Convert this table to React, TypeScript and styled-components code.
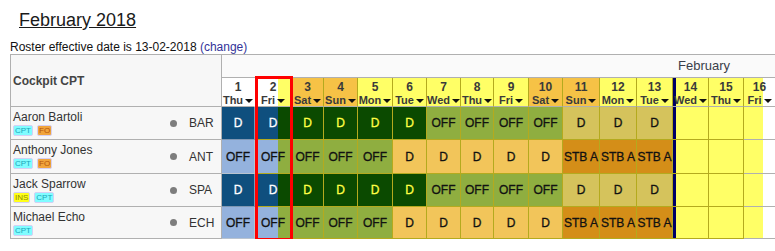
import React from 'react';
import styled, { createGlobalStyle } from 'styled-components';

const Global = createGlobalStyle`
  html, body { margin: 0; padding: 0; background: #fff; }
  body { font-family: "Liberation Sans", Arial, sans-serif; color: #111; }
`;

const C = {
  blueDark: '#0f4f7e',
  blueLight: '#94b2dd',
  greenDark: '#0b4a00',
  olive: '#8fae40',
  khaki: '#d5c35c',
  orangeLight: '#f2c55a',
  orangeDark: '#d48e18',
  yellow: '#ffff66',
  headOrange: '#f6c246',
  line: '#b4aa1e',
  gray: '#b0b0b0',
};

type Day = { d: number; n: string; w: number; kind: 'white' | 'split' | 'we' | 'wd' | 'cut' };

const days: Day[] = [
  { d: 1, n: 'Thu', w: 33, kind: 'white' },
  { d: 2, n: 'Fri', w: 37, kind: 'split' },
  { d: 3, n: 'Sat', w: 32, kind: 'we' },
  { d: 4, n: 'Sun', w: 34, kind: 'we' },
  { d: 5, n: 'Mon', w: 35, kind: 'wd' },
  { d: 6, n: 'Tue', w: 34, kind: 'wd' },
  { d: 7, n: 'Wed', w: 34, kind: 'wd' },
  { d: 8, n: 'Thu', w: 33, kind: 'wd' },
  { d: 9, n: 'Fri', w: 35, kind: 'wd' },
  { d: 10, n: 'Sat', w: 34, kind: 'we' },
  { d: 11, n: 'Sun', w: 37, kind: 'we' },
  { d: 12, n: 'Mon', w: 37, kind: 'wd' },
  { d: 13, n: 'Tue', w: 36, kind: 'wd' },
  { d: 14, n: 'Wed', w: 36, kind: 'wd' },
  { d: 15, n: 'Thu', w: 35, kind: 'wd' },
  { d: 16, n: 'Fri', w: 32, kind: 'cut' },
];

const headBg = (k: Day['kind']) => {
  switch (k) {
    case 'white':
      return '#fff';
    case 'split':
      return `linear-gradient(to right, #fff 23px, ${C.yellow} 23px)`;
    case 'we':
      return C.headOrange;
    case 'cut':
      return `linear-gradient(to right, ${C.yellow} 19px, #fff 19px)`;
    default:
      return C.yellow;
  }
};

type CellType = { bg: string; text: string; color: string; line: string };

const T: Record<string, CellType> = {
  blueD: { bg: C.blueDark, text: 'D', color: '#fff', line: '#7f97b3' },
  blueOff: { bg: C.blueLight, text: 'OFF', color: '#111', line: '#b9c3cf' },
  greenD: { bg: C.greenDark, text: 'D', color: '#ffff44', line: C.line },
  oliveOff: { bg: C.olive, text: 'OFF', color: '#111', line: C.line },
  khakiD: { bg: C.khaki, text: 'D', color: '#111', line: C.line },
  orangeD: { bg: C.orangeLight, text: 'D', color: '#111', line: C.line },
  stb: { bg: C.orangeDark, text: 'STB A', color: '#111', line: C.line },
  empty: { bg: C.yellow, text: '', color: '#111', line: C.line },
  cut: { bg: `linear-gradient(to right, ${C.yellow} 19px, #fff 19px)`, text: '', color: '#111', line: C.gray },
};

const split = (a: CellType, b: CellType): CellType => ({
  bg: `linear-gradient(to right, ${a.bg} 23px, ${b.bg} 23px)`,
  text: a.text,
  color: a.color,
  line: b.line,
});

const rowA: CellType[] = [
  T.blueD,
  split(T.blueD, T.greenD),
  T.greenD, T.greenD, T.greenD, T.greenD,
  T.oliveOff, T.oliveOff, T.oliveOff, T.oliveOff,
  T.khakiD, T.khakiD, T.khakiD,
  T.empty, T.empty, T.cut,
];

const rowB: CellType[] = [
  T.blueOff,
  { ...split(T.blueOff, T.oliveOff), text: 'OFF' },
  T.oliveOff, T.oliveOff, T.oliveOff,
  T.orangeD, T.orangeD, T.orangeD, T.orangeD, T.orangeD,
  T.stb, T.stb, T.stb,
  T.empty, T.empty, T.cut,
];

type Role = 'CPT' | 'FO' | 'INS';
const crew: { name: string; code: string; roles: Role[]; row: CellType[] }[] = [
  { name: 'Aaron Bartoli', code: 'BAR', roles: ['CPT', 'FO'], row: rowA },
  { name: 'Anthony Jones', code: 'ANT', roles: ['CPT', 'FO'], row: rowB },
  { name: 'Jack Sparrow', code: 'SPA', roles: ['INS', 'CPT'], row: rowA },
  { name: 'Michael Echo', code: 'ECH', roles: ['CPT'], row: rowB },
];

const roleStyle: Record<Role, { bg: string; fg: string }> = {
  CPT: { bg: '#80fcff', fg: '#1aa6b8' },
  FO: { bg: '#f0a43c', fg: '#b4520a' },
  INS: { bg: '#ffff1a', fg: '#8c8c00' },
};

const Page = styled.div`
  width: 775px;
  height: 251px;
  overflow: hidden;
`;

const Title = styled.h1`
  margin: 0;
  padding: 10px 0 0 19px;
  font-size: 18px;
  line-height: 21px;
  font-weight: normal;
  text-decoration: underline;
  color: #1a1a1a;
`;

const Effective = styled.div`
  margin: 9px 0 0 10px;
  font-size: 12px;
  line-height: 14px;
  height: 14px;
  white-space: nowrap;
`;

const ChangeLink = styled.a`
  color: #333399;
  text-decoration: none;
`;

const TableWrap = styled.div`
  position: relative;
  margin-left: 10px;
  width: 765px;
  overflow: hidden;
`;

const Grid = styled.div`
  display: grid;
  grid-template-columns: 211px ${days.map((d) => `${d.w}px`).join(' ')} minmax(0, 1fr);
  grid-template-rows: 23px 29px 33px 34px 33px 32px;
  border-top: 1px solid ${C.gray};
  border-left: 1px solid ${C.gray};
  width: 800px;
`;

const Corner = styled.div`
  grid-row: span 2;
  display: flex;
  align-items: center;
  padding-left: 2px;
  background: #f7f7f7;
  border-right: 1px solid ${C.gray};
  border-bottom: 1px solid ${C.gray};
  font-size: 12px;
  font-weight: bold;
  color: #444;
`;

const MonthCell = styled.div`
  grid-column: span 17;
  background: #fafafa;
  border-bottom: 1px solid ${C.gray};
  padding-left: 456px;
  font-size: 13px;
  line-height: 22px;
  color: #3a3f4a;
  white-space: nowrap;
`;

const DayHead = styled.div<{ $bg: string; $line: string; $today?: boolean }>`
  background: ${(p) => p.$bg};
  border-right: 1px solid ${(p) => p.$line};
  border-bottom: 1px solid ${C.gray};
  box-shadow: ${(p) => (p.$today ? 'inset 3px 0 0 #000066' : 'none')};
  padding-top: 2px;
  display: flex;
  flex-direction: column;
  align-items: center;
  color: #3a3a3a;
  font-weight: bold;
  white-space: nowrap;
`;

const DayNum = styled.div`
  font-size: 12px;
  line-height: 14px;
`;

const DayName = styled.div`
  display: flex;
  align-items: center;
  gap: 2px;
  font-size: 11px;
  line-height: 13px;
`;

const Caret = styled.span`
  width: 0;
  height: 0;
  border-left: 4px solid transparent;
  border-right: 4px solid transparent;
  border-top: 4px solid #111;
`;

const Filler = styled.div`
  background: #fff;
  border-bottom: 1px solid ${C.gray};
`;

const NameCell = styled.div`
  display: flex;
  align-items: center;
  background: #f7f7f7;
  border-right: 1px solid ${C.gray};
  border-bottom: 1px solid ${C.gray};
  padding-left: 2px;
`;

const Info = styled.div`
  flex: 1;
  align-self: flex-start;
  padding-top: 3px;
`;

const Name = styled.div`
  font-size: 12px;
  line-height: 14px;
  color: #333;
`;

const Badges = styled.div`
  display: flex;
  gap: 4px;
  margin-top: 1px;
`;

const Badge = styled.span<{ $bg: string; $fg: string }>`
  display: inline-block;
  height: 11px;
  box-sizing: border-box;
  padding: 0 1px;
  border: 1px solid #d4d0f4;
  border-radius: 2px;
  background: ${(p) => p.$bg};
  color: ${(p) => p.$fg};
  font-size: 8px;
  line-height: 9px;
`;

const Dot = styled.span`
  width: 7px;
  height: 7px;
  border-radius: 50%;
  background: #7d7d7d;
  margin-right: 12px;
`;

const Code = styled.span`
  width: 32px;
  font-size: 12px;
  color: #333;
`;

const DutyCell = styled.div<{ $bg: string; $fg: string; $line: string; $today?: boolean }>`
  background: ${(p) => p.$bg};
  color: ${(p) => p.$fg};
  border-right: 1px solid ${(p) => p.$line};
  border-bottom: 1px solid ${(p) => p.$line};
  box-shadow: ${(p) => (p.$today ? 'inset 3px 0 0 #000066' : 'none')};
  display: flex;
  align-items: center;
  justify-content: center;
  font-size: 12px;
  -webkit-text-stroke: 0.3px currentColor;
  white-space: nowrap;
  overflow: visible;
`;

const Highlight = styled.div`
  position: absolute;
  left: 245px;
  top: 22px;
  width: 38px;
  height: 165px;
  box-sizing: border-box;
  border: 3px solid #ff0000;
  pointer-events: none;
`;

export default function App() {
  return (
    <Page>
      <Global />
      <Title>February 2018</Title>
      <Effective>
        Roster effective date is 13-02-2018 <ChangeLink href="#">(change)</ChangeLink>
      </Effective>
      <TableWrap>
        <Grid>
          <Corner>Cockpit CPT</Corner>
          <MonthCell>February</MonthCell>
          {days.map((d) => (
            <DayHead
              key={d.d}
              $bg={headBg(d.kind)}
              $line={d.kind === 'white' ? 'transparent' : C.line}
              $today={d.d === 14}
            >
              <DayNum>{d.d}</DayNum>
              <DayName>
                {d.n}
                <Caret />
              </DayName>
            </DayHead>
          ))}
          <Filler />
          {crew.map((c) => (
            <React.Fragment key={c.code}>
              <NameCell>
                <Info>
                  <Name>{c.name}</Name>
                  <Badges>
                    {c.roles.map((r) => (
                      <Badge key={r} $bg={roleStyle[r].bg} $fg={roleStyle[r].fg}>
                        {r}
                      </Badge>
                    ))}
                  </Badges>
                </Info>
                <Dot />
                <Code>{c.code}</Code>
              </NameCell>
              {c.row.map((cell, i) => (
                <DutyCell
                  key={i}
                  $bg={cell.bg}
                  $fg={cell.color}
                  $line={cell.line}
                  $today={i === 13}
                >
                  {cell.text}
                </DutyCell>
              ))}
              <Filler />
            </React.Fragment>
          ))}
        </Grid>
        <Highlight />
      </TableWrap>
    </Page>
  );
}
